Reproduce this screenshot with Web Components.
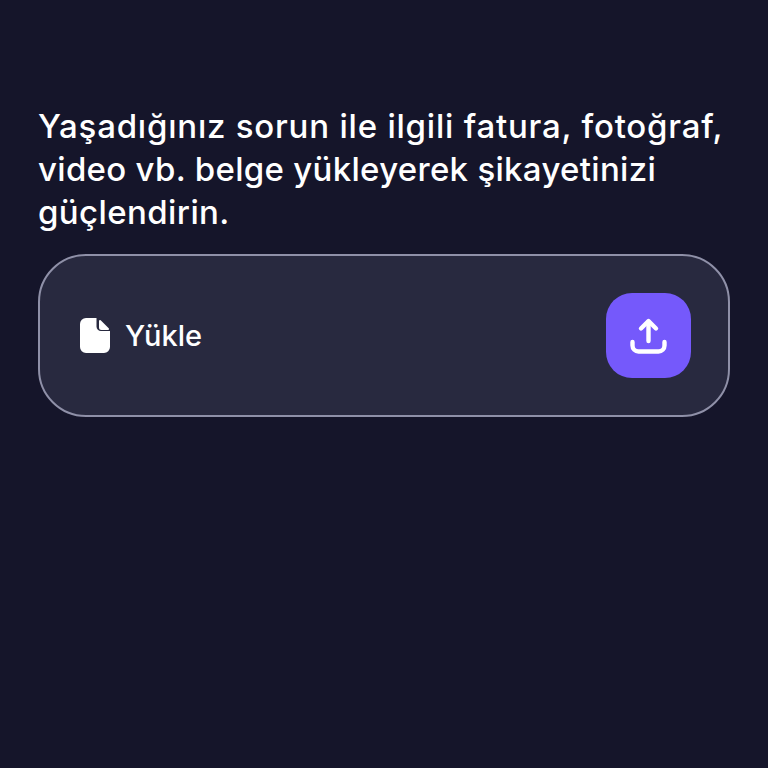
<!DOCTYPE html>
<html lang="tr">
<head>
<meta charset="utf-8">
<title>Yükle</title>
<style>
  html, body { margin: 0; background: #15152a; }
  body { font-family: Inter, "Liberation Sans", sans-serif; }
</style>
</head>
<body>
<upload-screen>
  <span style="letter-spacing:.78px">Yaşadığınız sorun ile ilgili fatura, fotoğraf,</span><br>
  <span style="letter-spacing:.3px">video vb. belge yükleyerek şikayetinizi</span><br>
  <span style="letter-spacing:.4px">güçlendirin.</span>
</upload-screen>

<script>
class UploadButton extends HTMLElement {
  constructor() {
    super();
    this.attachShadow({ mode: "open" }).innerHTML = `
      <style>
        :host {
          display: flex;
          align-items: center;
          justify-content: center;
          width: 85px;
          height: 85px;
          border-radius: 26px;
          background: #7559fb;
        }
        svg { display: block; }
      </style>
      <svg width="40" height="40" viewBox="0 0 40 40" fill="none" stroke="#fff" stroke-width="4.400" stroke-linecap="round" stroke-linejoin="round">
        <path d="M19.500 25V6"/>
        <path d="M12 12.500L19.500 5l7.500 7.500"/>
        <path d="M3.500 26v3.500a6 6 0 0 0 6 6h20a6 6 0 0 0 6-6V26"/>
      </svg>
    `;
  }
}

class UploadField extends HTMLElement {
  constructor() {
    super();
    this.attachShadow({ mode: "open" }).innerHTML = `
      <style>
        :host {
          display: flex;
          align-items: center;
          box-sizing: border-box;
          height: 163px;
          padding: 0 37px 0 40px;
          border: 2px solid #8f90a8;
          border-radius: 48px;
          background: #28293f;
        }
        .label {
          display: flex;
          align-items: center;
          gap: 15px;
          flex: 1;
          color: #fff;
          font-size: 29px;
          font-weight: 500;
        }
        svg { display: block; }
      </style>
      <div class="label">
        <svg width="30" height="35" viewBox="0 0 30 35">
          <path fill="#fff" d="M6 0H16.500V8.500a4.500 4.500 0 0 0 4.500 4.500H30V29a6 6 0 0 1-6 6H6a6 6 0 0 1-6-6V6a6 6 0 0 1 6-6Z"/>
          <path fill="#fff" stroke="#fff" stroke-width="2" stroke-linejoin="round" d="M20 3L28 11H21.500a1.500 1.500 0 0 1-1.500-1.500Z"/>
        </svg>
        <slot></slot>
      </div>
      <upload-button></upload-button>
    `;
  }
}

class UploadScreen extends HTMLElement {
  constructor() {
    super();
    this.attachShadow({ mode: "open" }).innerHTML = `
      <style>
        :host {
          display: flex;
          flex-direction: column;
          gap: 20px;
          box-sizing: border-box;
          height: 768px;
          padding: 105px 38px 0;
          background: #15152a;
          color: #fff;
        }
        p {
          margin: 0;
          font-size: 33px;
          line-height: 43px;
          font-weight: 500;
          white-space: nowrap;
        }
      </style>
      <p><slot></slot></p>
      <upload-field>Yükle</upload-field>
    `;
  }
}

customElements.define("upload-button", UploadButton);
customElements.define("upload-field", UploadField);
customElements.define("upload-screen", UploadScreen);
</script>
</body>
</html>
